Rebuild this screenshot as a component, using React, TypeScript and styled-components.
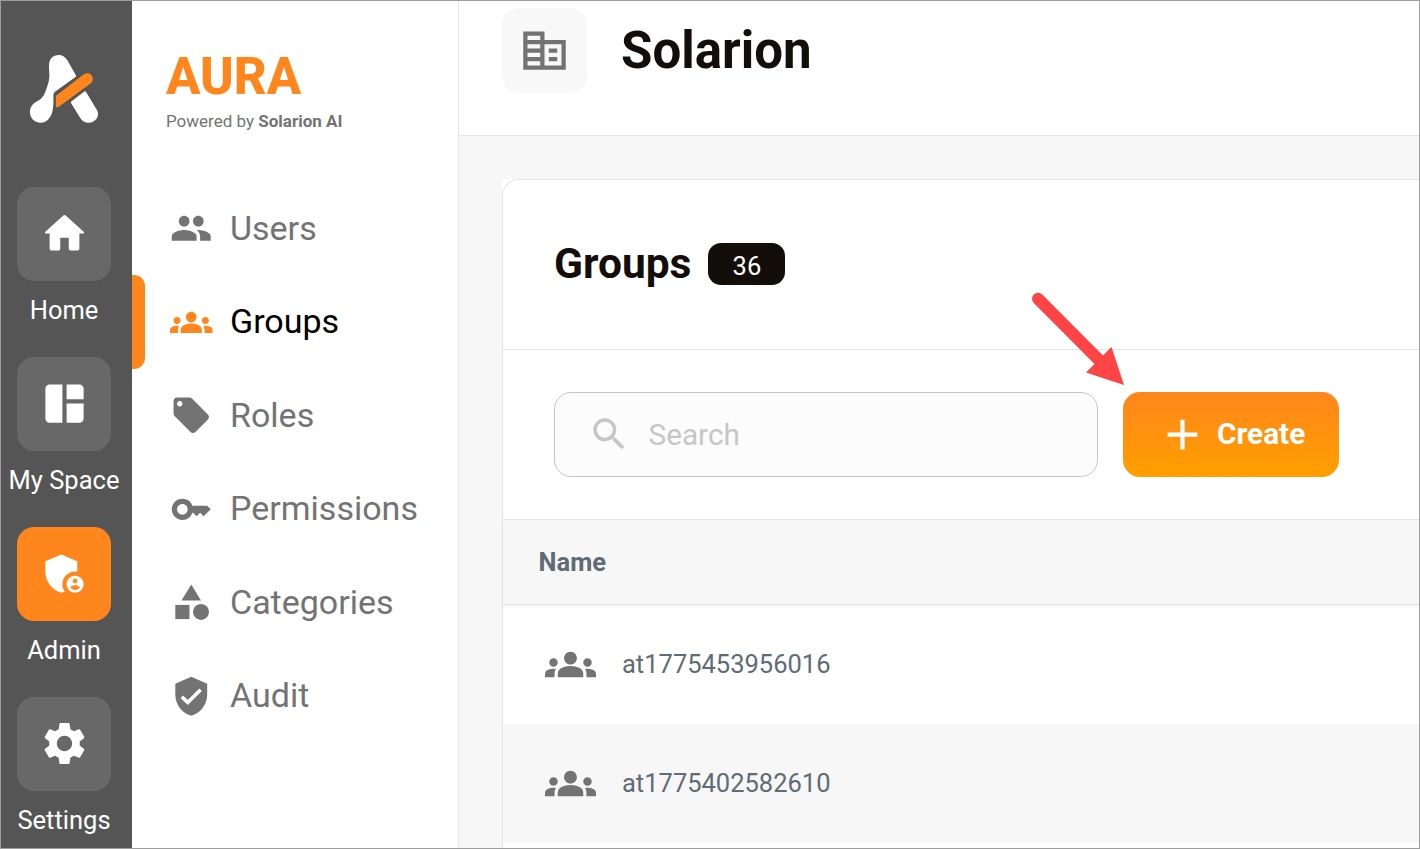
import React from "react";
import styled, { createGlobalStyle, css } from "styled-components";
import type { IconType } from "react-icons";
import {
  MdAdd,
  MdAdminPanelSettings,
  MdCategory,
  MdCorporateFare,
  MdGroups,
  MdKey,
  MdLocalOffer,
  MdPeople,
  MdSearch,
  MdSettings,
  MdSpaceDashboard,
  MdVerifiedUser,
} from "react-icons/md";

const color = {
  accent: "#ff861c",
  accentEnd: "#ff9f00",
  rail: "#555555",
  railButton: "#686868",
  ink: "#140e0a",
  muted: "#737373",
  slate: "#5f6b75",
  line: "#e5e5e5",
  surface: "#f7f7f7",
};

const GlobalStyle = createGlobalStyle`
  *, *::before, *::after { box-sizing: border-box; }
  html, body { margin: 0; padding: 0; overflow: hidden; }
  body { font-family: Roboto, "Liberation Sans", sans-serif; background: #fff; }
`;

const Frame = styled.div`
  position: relative;
  display: flex;
  width: 1420px;
  height: 849px;
  border: 1px solid #9d9d9d;
  background: #fff;
  overflow: hidden;
`;

const Rail = styled.nav`
  flex: 0 0 131px;
  display: flex;
  flex-direction: column;
  align-items: center;
  padding-right: 5px;
  background: ${color.rail};
`;

const RailLogo = styled.div`
  flex: 0 0 186px;
  padding-top: 49px;
  svg { display: block; }
`;

const RailItem = styled.div`
  height: 170px;
  flex: none;
  display: flex;
  flex-direction: column;
  align-items: center;
`;

const RailButton = styled.div<{ $active?: boolean }>`
  width: 94px;
  height: 94px;
  border-radius: 17px;
  display: flex;
  align-items: center;
  justify-content: center;
  padding: 0 0 1px 1px;
  color: #fff;
  background: ${(p) => (p.$active ? color.accent : color.railButton)};
`;

const RailLabel = styled.span`
  margin-top: 14px;
  font-size: 25.5px;
  line-height: 30px;
  white-space: nowrap;
  color: #fff;
`;

const Sidebar = styled.aside`
  flex: 0 0 327px;
  border-right: 1px solid ${color.line};
  background: #fff;
`;

const Brand = styled.div`
  height: 180.6px;
  padding: 46px 0 0 34px;
`;

const BrandName = styled.div`
  font-size: 51px;
  line-height: 60px;
  font-weight: 800;
  color: ${color.accent};
`;

const BrandNote = styled.div`
  margin-top: 4px;
  font-size: 17px;
  line-height: 20px;
  white-space: nowrap;
  color: ${color.muted};
`;

const NavItem = styled.div<{ $active?: boolean }>`
  position: relative;
  height: 93.5px;
  display: flex;
  align-items: center;
  gap: 17.5px;
  padding-left: 38px;
  font-size: 34px;
  line-height: 40px;
  color: ${(p) => (p.$active ? "#000" : color.muted)};
  svg { color: ${(p) => (p.$active ? color.accent : color.muted)}; }
  ${(p) =>
    p.$active &&
    css`
      &::before {
        content: "";
        position: absolute;
        left: 0;
        top: 0;
        width: 13px;
        height: 94px;
        border-radius: 0 11px 11px 0;
        background: ${color.accent};
      }
    `}
`;

const NavLabel = styled.span`
  padding-bottom: 1px;
`;

const Main = styled.main`
  flex: 1;
  min-width: 0;
  display: flex;
  flex-direction: column;
  background: ${color.surface};
`;

const Header = styled.header`
  flex: 0 0 135px;
  display: flex;
  align-items: flex-start;
  gap: 34px;
  padding: 7px 0 0 43px;
  border-bottom: 1px solid ${color.line};
  background: #fff;
`;

const OrgBadge = styled.div`
  width: 85px;
  height: 85px;
  border-radius: 17px;
  display: flex;
  align-items: center;
  justify-content: center;
  color: ${color.muted};
  background: #f8f8f8;
`;

const OrgName = styled.h1`
  margin: 0;
  font-size: 51px;
  line-height: 86px;
  font-weight: 700;
  color: ${color.ink};
`;

const CardBackdrop = styled.div`
  flex: 1;
  margin: 43px 0 0 43px;
  background: #fff;
`;

const Card = styled.section`
  height: 100%;
  border: 1px solid ${color.line};
  border-width: 1px 0 0 1px;
  border-radius: 17px 0 0 0;
`;

const CardTitleRow = styled.div`
  height: 170px;
  display: flex;
  align-items: center;
  gap: 17px;
  padding: 0 0 2px 51px;
  border-bottom: 1px solid ${color.line};
`;

const CardTitle = styled.h2`
  margin: 0;
  font-size: 42.5px;
  line-height: 50px;
  font-weight: 700;
  color: ${color.ink};
`;

const CountPill = styled.span`
  width: 77px;
  height: 42px;
  border-radius: 13px;
  display: flex;
  align-items: center;
  justify-content: center;
  padding-top: 4px;
  font-size: 25.5px;
  color: #fff;
  background: ${color.ink};
`;

const Toolbar = styled.div`
  height: 170px;
  display: flex;
  align-items: center;
  gap: 25px;
  padding-left: 51px;
  border-bottom: 1px solid ${color.line};
`;

const SearchBox = styled.div`
  width: 544px;
  height: 85px;
  display: flex;
  align-items: center;
  gap: 18px;
  padding-left: 33px;
  border: 1px solid #c6c6c6;
  border-radius: 17px;
  font-size: 29.75px;
  color: #c6c6c6;
  background: #fcfcfc;
  span { padding-bottom: 1px; }
`;

const CreateButton = styled.div`
  width: 216px;
  height: 85px;
  display: flex;
  align-items: center;
  gap: 9px;
  padding-left: 34px;
  border-radius: 17px;
  font-size: 29.75px;
  font-weight: 700;
  color: #fff;
  background: linear-gradient(180deg, ${color.accent}, ${color.accentEnd});
  span { padding-bottom: 2px; }
`;

const TableHead = styled.div`
  position: relative;
  height: 85px;
  display: flex;
  align-items: center;
  padding-left: 35.5px;
  border-bottom: 1px solid ${color.line};
  box-shadow: 0 2px 4px rgba(0, 0, 0, 0.05);
  font-size: 25.5px;
  font-weight: 700;
  color: ${color.slate};
  background: ${color.surface};
`;

const TableRow = styled.div<{ $shaded?: boolean }>`
  height: 119px;
  display: flex;
  align-items: center;
  gap: 26px;
  padding-left: 42px;
  font-size: 25.5px;
  color: ${color.slate};
  background: ${(p) => (p.$shaded ? color.surface : "transparent")};
  svg { color: ${color.muted}; }
  span { padding-bottom: 2px; }
`;

const Pointer = styled.svg`
  position: absolute;
  left: 1019px;
  top: 279px;
  width: 120px;
  height: 120px;
`;

const HomeIcon = ({ size }: { size: number }) => (
  <svg width={size} height={size} viewBox="0 0 24 24" fill="currentColor">
    <path d="M10 19v-5h4v5c0 .55.45 1 1 1h3c.55 0 1-.45 1-1v-7h1.7c.46 0 .68-.57.33-.87L12.67 3.6c-.38-.34-.96-.34-1.34 0l-8.36 7.53c-.34.3-.13.87.33.87H5v7c0 .55.45 1 1 1h3c.55 0 1-.45 1-1z" />
  </svg>
);

const Logo = () => (
  <svg width="80" height="80" viewBox="24 50 80 80">
    <path
      fill="#fff"
      d="M49 65 C49 58.500 53.500 55 58.500 55 C62.500 55 65.500 57 67.500 60.500 L76 75.500 C76.300 76.200 76.100 76.600 75.500 77 L56 91 C53.800 92.600 53.400 93.500 53.400 96 C53.400 100 53.600 105 52.700 110 C51.500 116.500 47.500 122.700 40.700 122.700 C34 122.700 29.900 117.500 29.900 111.700 C29.900 107.500 32 104.300 35.500 102.300 C40.500 99.600 43.500 97.500 46 90 C48 84.500 50 79 49.300 73 C49 70.500 49 67.500 49 65 Z"
    />
    <path
      fill="#fff"
      d="M71.300 101.500 L84 91.700 C84.900 91.100 85.600 91.300 86.100 92 L96 108.500 C97.300 110.700 98 112 98 114 C98 119 93.500 122.800 88.500 122.800 C85 122.800 82 121 80.300 118 L71 103 C70.700 102.400 70.800 101.900 71.300 101.500 Z"
    />
    <path
      fill={color.accent}
      d="M56.300 95.500 L82.500 75.300 C84.800 73.400 88.500 72.300 91 74.700 C93.600 77.200 93.400 81.400 90.500 83.600 L58.500 106.900 C57.200 107.800 55.900 107.400 55.900 105.800 L55.900 96.600 C55.900 96.100 56 95.800 56.300 95.500 Z"
    />
  </svg>
);

const railItems: { label: string; icon: IconType | typeof HomeIcon; active?: boolean }[] = [
  { label: "Home", icon: HomeIcon },
  { label: "My Space", icon: MdSpaceDashboard },
  { label: "Admin", icon: MdAdminPanelSettings, active: true },
  { label: "Settings", icon: MdSettings },
];

const navItems: { label: string; icon: IconType; active?: boolean }[] = [
  { label: "Users", icon: MdPeople },
  { label: "Groups", icon: MdGroups, active: true },
  { label: "Roles", icon: MdLocalOffer },
  { label: "Permissions", icon: MdKey },
  { label: "Categories", icon: MdCategory },
  { label: "Audit", icon: MdVerifiedUser },
];

const groups = ["at1775453956016", "at1775402582610"];

export default function App() {
  return (
    <>
      <GlobalStyle />
      <Frame>
        <Rail>
          <RailLogo>
            <Logo />
          </RailLogo>
          {railItems.map(({ label, icon: Icon, active }) => (
            <RailItem key={label}>
              <RailButton $active={active}>
                <Icon size={51} />
              </RailButton>
              <RailLabel>{label}</RailLabel>
            </RailItem>
          ))}
        </Rail>
        <Sidebar>
          <Brand>
            <BrandName>AURA</BrandName>
            <BrandNote>
              Powered by <b>Solarion AI</b>
            </BrandNote>
          </Brand>
          {navItems.map(({ label, icon: Icon, active }) => (
            <NavItem key={label} $active={active}>
              <Icon size={42.5} />
              <NavLabel>{label}</NavLabel>
            </NavItem>
          ))}
        </Sidebar>
        <Main>
          <Header>
            <OrgBadge>
              <MdCorporateFare size={51} />
            </OrgBadge>
            <OrgName>Solarion</OrgName>
          </Header>
          <CardBackdrop>
            <Card>
              <CardTitleRow>
                <CardTitle>Groups</CardTitle>
                <CountPill>36</CountPill>
              </CardTitleRow>
              <Toolbar>
                <SearchBox>
                  <MdSearch size={42.5} />
                  <span>Search</span>
                </SearchBox>
                <CreateButton>
                  <MdAdd size={51} />
                  <span>Create</span>
                </CreateButton>
              </Toolbar>
              <TableHead>Name</TableHead>
              {groups.map((name, i) => (
                <TableRow key={name} $shaded={i % 2 === 1}>
                  <MdGroups size={51} />
                  <span>{name}</span>
                </TableRow>
              ))}
            </Card>
          </CardBackdrop>
        </Main>
        <Pointer viewBox="1020 280 120 120">
          <path d="M1038 298.700 L1100 361" stroke="#fe4444" strokeWidth="12" strokeLinecap="round" />
          <path d="M1111.500 347 L1124 385 L1086 372.500 Z" fill="#fe4444" />
        </Pointer>
      </Frame>
    </>
  );
}
